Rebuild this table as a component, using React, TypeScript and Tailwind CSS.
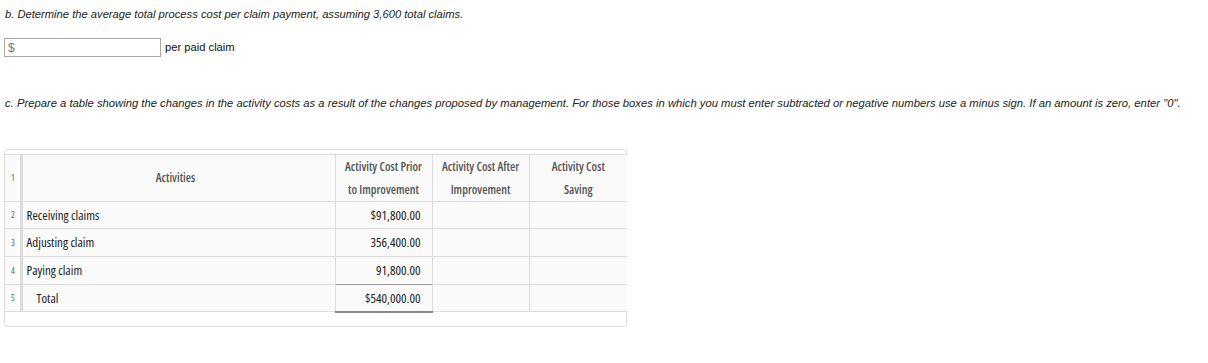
import React from "react";

const rows = [
  { n: "2", label: "Receiving claims", prior: "$91,800.00", h: "h-[27px]" },
  { n: "3", label: "Adjusting claim", prior: "356,400.00", h: "h-[28px]" },
  { n: "4", label: "Paying claim", prior: "91,800.00", h: "h-[28px]" },
];

export default function App() {
  const narrow = { fontFamily: '"Open Sans", "Noto Sans", sans-serif', fontStretch: "75%" };
  return (
    <div className="w-[1208px] h-[363px] bg-white text-[#222] pl-[5px] pt-[8px]" style={{ fontFamily: '"Liberation Sans", Arial, sans-serif' }}>
      <p className="italic text-[11.2px] leading-[13px] text-[#222]">
        b. Determine the average total process cost per claim payment, assuming 3,600 total claims.
      </p>
      <div className="mt-[17px] flex items-center -ml-[1px]">
        <div className="w-[157px] h-[19px] border border-[#a9a9a9] flex items-center pl-[3px] text-[12px] text-[#777]">$</div>
        <span className="ml-[4px] text-[11.2px] text-[#111]">per paid claim</span>
      </div>
      <p className="mt-[40px] italic text-[11.25px] leading-[13px] text-[#222] whitespace-nowrap">
        c. Prepare a table showing the changes in the activity costs as a result of the changes proposed by management. For those boxes in which you must enter subtracted or negative numbers use a minus sign. If an amount is zero, enter "0".
      </p>
      <div className="mt-[39px] -ml-[1px] w-[623px] h-[178px] border border-[#dcdcdc] rounded-[3px] pt-[4px]" style={narrow}>
        <table className="border-collapse w-[622px] table-fixed">
          <colgroup>
            <col className="w-[16px]" />
            <col className="w-[314px]" />
            <col className="w-[97px]" />
            <col className="w-[97px]" />
            <col className="w-[98px]" />
          </colgroup>
          <thead>
            <tr className="h-[46px] bg-[#fafafa] border-t border-b border-[#dcdcdc]">
              <td className="text-[9px] text-[#666] align-middle pl-[6px] border-r-[3px] border-[#dcdcdc]">1</td>
              <td className="text-center text-[12px] font-semibold text-[#555] border-r border-[#dcdcdc] whitespace-nowrap pr-[6px]">Activities</td>
              <td className="text-center text-[12px] font-semibold text-[#555] leading-[23px] border-r border-[#dcdcdc] whitespace-nowrap">Activity Cost Prior<br />to Improvement</td>
              <td className="text-center text-[12px] font-semibold text-[#555] leading-[23px] border-r border-[#dcdcdc] whitespace-nowrap">Activity Cost After<br />Improvement</td>
              <td className="text-center text-[12px] font-semibold text-[#555] leading-[23px] whitespace-nowrap">Activity Cost<br />Saving</td>
            </tr>
          </thead>
          <tbody>
            {rows.map((r) => (
              <tr key={r.n} className={`${r.h} bg-[#fafafa] border-b border-[#dcdcdc]`}>
                <td className="text-[9px] text-[#666] pl-[6px] border-r-[3px] border-[#dcdcdc]">{r.n}</td>
                <td className="text-[13px] text-[#222] pl-[4px] pt-[1px] border-r border-[#dcdcdc]">{r.label}</td>
                <td className="text-[13px] text-[#222] text-right pr-[11px] pt-[1px] border-r border-[#dcdcdc]">{r.prior}</td>
                <td className="border-r border-[#dcdcdc]"></td>
                <td></td>
              </tr>
            ))}
            <tr className="h-[27px] bg-[#fafafa] border-b border-[#dcdcdc]">
              <td className="text-[9px] text-[#666] pl-[6px] border-r-[3px] border-[#dcdcdc]">5</td>
              <td className="text-[13px] text-[#222] pl-[14px] pt-[1px] border-r border-[#dcdcdc]">Total</td>
              <td className="text-[13px] text-[#222] text-right pr-[11px] pt-[1px] border-r border-[#dcdcdc] border-t border-t-[#999] border-b-2 border-b-[#888]">$540,000.00</td>
              <td className="border-r border-[#dcdcdc]"></td>
              <td></td>
            </tr>
          </tbody>
        </table>
      </div>
    </div>
  );
}
